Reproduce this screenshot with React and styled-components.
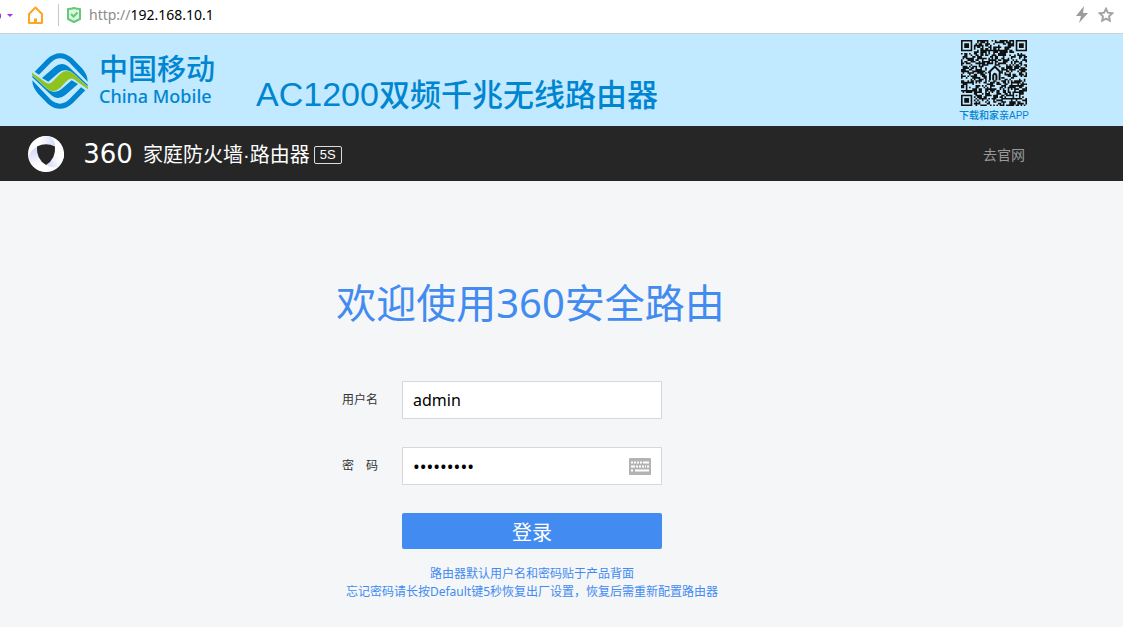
import React from "react";
import styled, { createGlobalStyle } from "styled-components";

const ui = '"Noto Sans", "Noto Sans CJK SC", sans-serif';
const brand = '"Liberation Sans", "Noto Sans CJK SC", sans-serif';

const GlobalStyle = createGlobalStyle`
  *, *::before, *::after { box-sizing: border-box; }
  body {
    margin: 0;
    min-height: 100vh;
    background: #f5f6f8;
    font-family: ${ui};
  }
  button, input { font: inherit; }
`;

const BrowserBar = styled.div`
  display: flex;
  align-items: center;
  height: 34px;
  padding: 0 9px 4px 0;
  background: #fff;
  border-bottom: 1px solid #c9d3d9;
`;

const IconButton = styled.button`
  display: flex;
  flex: none;
  padding: 0;
  border: 0;
  background: none;
  margin-left: ${(p) => p.$gap || 0}px;
`;

const Divider = styled.span`
  width: 1px;
  height: 22px;
  margin: 0 8px 0 14px;
  background: #c8c8c8;
`;

const Address = styled.div`
  flex: 1;
  margin-left: 8px;
  font-size: 14px;
  line-height: 20px;
  color: #000;
`;

const Scheme = styled.span`
  color: #8c8c8c;
`;

const Banner = styled.header`
  display: flex;
  align-items: center;
  height: 92px;
  padding: 2px 94px 0 32px;
  background: #c1e9ff;
  color: #0085d0;
`;

const Carrier = styled.div`
  display: flex;
  align-items: center;
  gap: 11px;
`;

const CarrierNames = styled.div`
  display: flex;
  flex-direction: column;
  white-space: nowrap;
`;

const CarrierChinese = styled.span`
  font: 500 29px/30px ${brand};
`;

const CarrierEnglish = styled.span`
  font: 500 18px/22px "Noto Sans", sans-serif;
`;

const Model = styled.h1`
  flex: 1;
  margin: 28px 0 0 41px;
  font: 500 31px/40px ${brand};
  white-space: nowrap;
`;

const ModelCode = styled.span`
  font-size: 34px;
`;

const AppDownload = styled.figure`
  display: flex;
  flex-direction: column;
  align-items: center;
  gap: 3px;
  margin: 0;
`;

const Caption = styled.figcaption`
  font: 500 10px/14px ${brand};
  white-space: nowrap;
`;

const NavBar = styled.nav`
  display: flex;
  align-items: center;
  height: 55px;
  padding: 0 98px 0 28px;
  background: #262626;
  color: #fff;
`;

const Wordmark = styled.span`
  width: 70px;
  margin-left: 9px;
  text-align: center;
  font: 26px/32px "DejaVu Sans", sans-serif;
`;

const ProductName = styled.span`
  padding-top: 2px;
  font: 20px/32px ${brand};
  white-space: nowrap;
`;

const Badge = styled.span`
  margin: 2px 0 0 4px;
  width: 28px;
  border: 1px solid #ddd;
  border-radius: 2px;
  text-align: center;
  font: 13px/16px ${brand};
`;

const SiteLink = styled.a`
  margin-left: auto;
  padding-top: 2px;
  color: #999;
  font-size: 14px;
  line-height: 20px;
  text-decoration: none;
`;

const Main = styled.main`
  display: flex;
  flex-direction: column;
  align-items: center;
  padding: 92px 59px 24px 0;
`;

const Welcome = styled.h2`
  margin: 0;
  padding-right: 3px;
  color: #428bf0;
  font-size: 40px;
  font-weight: 400;
  line-height: 60px;
  white-space: nowrap;
`;

const LoginForm = styled.form`
  display: grid;
  grid-template-columns: 60px 260px 60px;
  row-gap: 28px;
  align-items: center;
  margin-top: 48px;
`;

const Label = styled.label`
  grid-column: 1;
  color: #333;
  font-size: 12px;
  line-height: 18px;
  white-space: pre;
`;

const Field = styled.div`
  grid-column: 2;
  display: flex;
  align-items: center;
  height: 38px;
  padding: 0 10px;
  border: 1px solid #d6d8db;
  background: #fff;
`;

const TextInput = styled.input`
  flex: 1;
  min-width: 0;
  padding: 0;
  border: 0;
  outline: 0;
  background: none;
  color: #000;
  font-size: ${(p) => (p.type === "password" ? 18 : 16)}px;
  line-height: 24px;
`;

const LoginButton = styled.button`
  grid-column: 2;
  height: 36px;
  padding: 4px 0 0;
  border: 0;
  border-radius: 2px;
  background: #428bf0;
  color: #fff;
  font-size: 20px;
  line-height: 32px;
`;

const Hints = styled.div`
  margin-top: 16px;
  color: #428bf0;
  font-size: 12px;
  line-height: 18px;
  text-align: center;
  white-space: nowrap;
`;

const Hint = styled.p`
  margin: 0;
`;

function MobileLogo() {
  const half = (
    <>
      <path fill="#0085d0" d="M20 71 L58 32 Q95 0 132 30 L162 61 Q179 80 179 101 L125 44 Q96 18 68 44 L33 80 Z" />
      <path fill="#0085d0" d="M42 90 L80 57 Q103 38 126 60 L179 110 L179 116 L136 78 Q113 58 92 74 L61 101 Z" />
    </>
  );
  return (
    <svg width="56" height="56" viewBox="12 15 168 168" aria-hidden="true">
      {half}
      <g transform="rotate(180 96 99)">{half}</g>
      <path
        fill="#8fc31f"
        stroke="#c1e9ff"
        strokeWidth="1"
        d="M11 73 L53 103 Q65 111 76 98 L96 77 Q117 59 137 77 L181 118 L181 125 L139 95 Q127 87 116 100 L96 121 Q75 139 55 121 L11 80 Z"
      />
    </svg>
  );
}

function qrPath() {
  const n = 41;
  let seed = 90210;
  let d = "";
  const corners = [[0, 0], [n - 7, 0], [0, n - 7]];
  for (let y = 0; y < n; y++) {
    for (let x = 0; x < n; x++) {
      seed = (seed * 1103515245 + 12345) % 2147483648;
      let on = seed / 2147483648 < 0.56;
      if (x > 15 && x < 25 && y > 15 && y < 25) on = false;
      for (const [cx, cy] of corners) {
        const r = Math.max(Math.abs(x - cx - 3), Math.abs(y - cy - 3));
        if (r <= 4) on = r === 3 || r <= 1;
      }
      if (Math.max(Math.abs(x - 34), Math.abs(y - 34)) <= 2) {
        on = Math.max(Math.abs(x - 34), Math.abs(y - 34)) !== 1;
      }
      if (on) d += `M${x} ${y}h1v1h-1z`;
    }
  }
  return d;
}

function QrCode() {
  return (
    <svg width="66" height="66" viewBox="0 0 41 41" role="img" aria-label="QR">
      <path d={qrPath()} fill="#111" />
      <path d="M17 20.5l4-4 4 4M18 20v5M24 20v5M20 25v-3q1-2 2 0v3M24 16v1" fill="none" stroke="#111" strokeWidth="1.2" />
    </svg>
  );
}

function ShieldLogo() {
  return (
    <svg width="36" height="36" viewBox="0 0 36 36" aria-hidden="true">
      <defs>
        <linearGradient id="ringTop" x1="0" y1="0" x2="1" y2="0">
          <stop offset="0.4" stopColor="#fff" />
          <stop offset="1" stopColor="#d5d9fb" />
        </linearGradient>
        <linearGradient id="ringLeft" x1="0" y1="0" x2="0.3" y2="1">
          <stop offset="0" stopColor="#ccd1fa" />
          <stop offset="0.8" stopColor="#fff" />
        </linearGradient>
        <linearGradient id="ringRight" x1="1" y1="0" x2="0" y2="1">
          <stop offset="0.5" stopColor="#fff" />
          <stop offset="1" stopColor="#d0d4fa" />
        </linearGradient>
      </defs>
      <circle cx="18" cy="18" r="18" fill="#fff" />
      <path d="M4 7Q12 -2 23 1Q28 6 27 11Q18 6 9 11Q5 13 1 19Q0 12 4 7" fill="url(#ringTop)" />
      <path d="M1 19Q4 13 9 11Q9 22 18 29Q22 32 29 31Q20 38 10 34Q0 28 1 19" fill="url(#ringLeft)" />
      <path d="M27 11Q28 22 18 29Q23 32 29 31Q37 24 36 17Q34 8 24 1Q28 5 27 11" fill="url(#ringRight)" />
      <path d="M9 10.500Q18 6 27 10.500Q28 23 18 29Q8 23 9 10.500Z" fill="#262626" />
    </svg>
  );
}

function KeyboardIcon() {
  return (
    <svg width="22" height="17" viewBox="0 0 22 17" aria-hidden="true">
      <rect width="22" height="17" rx="1" fill="#b3b3b3" />
      <path
        d="M2 4.5h2M5 4.5h2M8 4.5h2M11 4.5h2M14 4.5h6M2 8.5h4M7 8.5h2M10 8.5h2M13 8.5h2M16 8.5h1M18 8.5h2M2 12.5h2M6 12.5h14"
        stroke="#fff"
        strokeWidth="2"
      />
    </svg>
  );
}

export default function App() {
  return (
    <>
      <GlobalStyle />
      <BrowserBar>
        <IconButton type="button" aria-label="菜单">
          <svg width="14" height="12" viewBox="0 0 14 12">
            <circle cx="-3" cy="7" r="4" fill="#8a2be2" />
            <path d="M7 5h6l-3 3z" fill="#a030f0" />
          </svg>
        </IconButton>
        <IconButton type="button" aria-label="主页" $gap={13}>
          <svg width="17" height="18" viewBox="0 0 17 18" fill="none" stroke="#ffa51f" strokeWidth="2" strokeLinejoin="round">
            <path d="M2 8L8.500 1.500L15 8V17H2Z" />
            <path d="M8.500 16V12.500" strokeWidth="3" />
          </svg>
        </IconButton>
        <Divider />
        <svg width="14" height="16" viewBox="0 0 14 16" fill="none" stroke="#67c778" strokeWidth="2" aria-hidden="true">
          <path d="M1 2Q4 2 7 1Q10 2 13 2V12L7 15L1 12Z" fill="#d9f8df" strokeLinejoin="round" />
          <path d="M4 7L6.500 9.500L10.500 5.500" />
        </svg>
        <Address>
          <Scheme>http://</Scheme>192.168.10.1
        </Address>
        <IconButton type="button" aria-label="加速">
          <svg width="14" height="17" viewBox="0 0 14 17">
            <path d="M9 0L1 10H6L4 17L13 7H8Z" fill="#9b9b9b" />
          </svg>
        </IconButton>
        <IconButton type="button" aria-label="收藏" $gap={9}>
          <svg width="16" height="16" viewBox="0 0 16 16">
            <path
              d="M8 1.800L9.900 5.700L14.200 6.300L11.100 9.300L11.800 13.700L8 11.600L4.200 13.700L4.900 9.300L1.800 6.300L6.100 5.700Z"
              fill="none"
              stroke="#a3a3a3"
              strokeWidth="2"
            />
          </svg>
        </IconButton>
      </BrowserBar>

      <Banner>
        <Carrier>
          <MobileLogo />
          <CarrierNames>
            <CarrierChinese>中国移动</CarrierChinese>
            <CarrierEnglish>China Mobile</CarrierEnglish>
          </CarrierNames>
        </Carrier>
        <Model>
          <ModelCode>AC1200</ModelCode>双频千兆无线路由器
        </Model>
        <AppDownload>
          <QrCode />
          <Caption>下载和家亲APP</Caption>
        </AppDownload>
      </Banner>

      <NavBar>
        <ShieldLogo />
        <Wordmark>360</Wordmark>
        <ProductName>家庭防火墙·路由器</ProductName>
        <Badge>5S</Badge>
        <SiteLink href="#site">去官网</SiteLink>
      </NavBar>

      <Main>
        <Welcome>欢迎使用360安全路由</Welcome>
        <LoginForm onSubmit={(e) => e.preventDefault()}>
          <Label htmlFor="username">用户名</Label>
          <Field>
            <TextInput id="username" type="text" defaultValue="admin" />
          </Field>
          <Label htmlFor="password">密　码</Label>
          <Field>
            <TextInput id="password" type="password" defaultValue="123456789" />
            <IconButton type="button" aria-label="软键盘">
              <KeyboardIcon />
            </IconButton>
          </Field>
          <LoginButton type="submit">登录</LoginButton>
        </LoginForm>
        <Hints>
          <Hint>路由器默认用户名和密码贴于产品背面</Hint>
          <Hint>忘记密码请长按Default键5秒恢复出厂设置，恢复后需重新配置路由器</Hint>
        </Hints>
      </Main>
    </>
  );
}
